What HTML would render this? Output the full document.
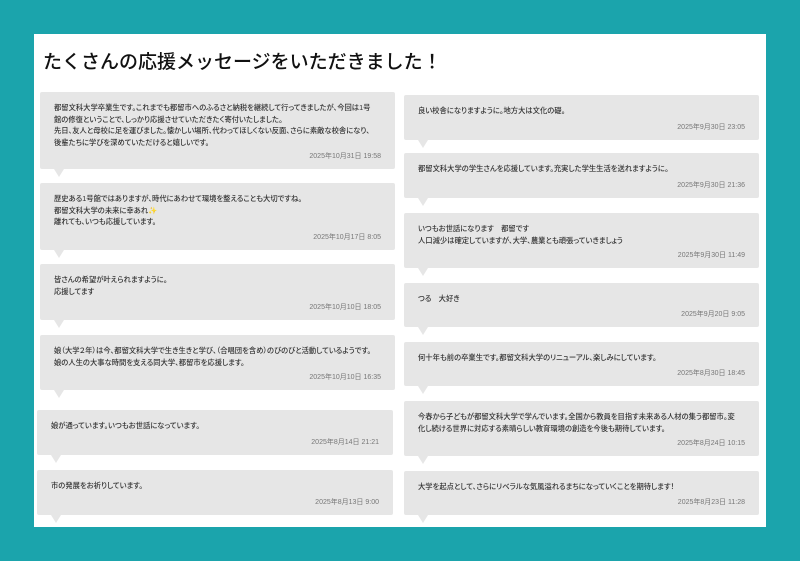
<!DOCTYPE html>
<html><head><meta charset="utf-8"><style>
*{margin:0;padding:0;box-sizing:border-box}
body{width:800px;height:561px;background:#1ba4ac;position:relative;overflow:hidden;font-family:"Liberation Sans","Noto Sans CJK JP",sans-serif;font-feature-settings:"palt"}
.panel{position:absolute;left:34px;top:34px;width:732px;height:493px;background:#fff}
h1{position:absolute;left:43px;top:47px;font-size:19px;font-weight:500;color:#111;white-space:nowrap;font-feature-settings:normal}
.b{position:absolute;background:#e6e6e6;border-radius:2px;padding:10px 14px 0 14px;font-size:7.3px;line-height:11.5px;color:#333;font-weight:500}
.b p{white-space:nowrap}
.b .d{position:absolute;right:14px;bottom:7px;color:#777;font-size:7px;font-weight:400}
.b:after{content:"";position:absolute;left:14px;bottom:-8px;border-left:5px solid transparent;border-right:5px solid transparent;border-top:8px solid #e6e6e6}
</style></head><body>
<div class="panel"></div>
<h1>たくさんの応援メッセージをいただきました！</h1>

<div class="b" style="left:40px;top:92px;width:355px;height:77px"><p>都留文科大学卒業生です。これまでも都留市へのふるさと納税を継続して行ってきましたが、今回は1号<br>館の修復ということで、しっかり応援させていただきたく寄付いたしました。<br>先日、友人と母校に足を運びました。懐かしい場所、代わってほしくない反面、さらに素敵な校舎になり、<br>後輩たちに学びを深めていただけると嬉しいです。</p><span class="d">2025年10月31日 19:58</span></div>
<div class="b" style="left:40px;top:183px;width:355px;height:67px"><p>歴史ある1号館ではありますが、時代にあわせて環境を整えることも大切ですね。<br>都留文科大学の未来に幸あれ<span style="color:#e8c040">✨</span><br>離れても、いつも応援しています。</p><span class="d">2025年10月17日 8:05</span></div>
<div class="b" style="left:40px;top:264px;width:355px;height:56px"><p>皆さんの希望が叶えられますように。<br>応援してます</p><span class="d">2025年10月10日 18:05</span></div>
<div class="b" style="left:40px;top:335px;width:355px;height:55px"><p>娘（大学２年）は今、都留文科大学で生き生きと学び、（合唱団を含め）のびのびと活動しているようです。<br>娘の人生の大事な時間を支える同大学、都留市を応援します。</p><span class="d">2025年10月10日 16:35</span></div>
<div class="b" style="left:37px;top:410px;width:356px;height:45px"><p>娘が通っています。いつもお世話になっています。</p><span class="d">2025年8月14日 21:21</span></div>
<div class="b" style="left:37px;top:470px;width:356px;height:45px"><p>市の発展をお祈りしています。</p><span class="d">2025年8月13日 9:00</span></div>

<div class="b" style="left:404px;top:95px;width:355px;height:45px"><p>良い校舎になりますように。地方大は文化の礎。</p><span class="d">2025年9月30日 23:05</span></div>
<div class="b" style="left:404px;top:153px;width:355px;height:45px"><p>都留文科大学の学生さんを応援しています。充実した学生生活を送れますように。</p><span class="d">2025年9月30日 21:36</span></div>
<div class="b" style="left:404px;top:213px;width:355px;height:55px"><p>いつもお世話になります　都留です<br>人口減少は確定していますが、大学、農業とも頑張っていきましょう</p><span class="d">2025年9月30日 11:49</span></div>
<div class="b" style="left:404px;top:283px;width:355px;height:44px"><p>つる　大好き</p><span class="d">2025年9月20日 9:05</span></div>
<div class="b" style="left:404px;top:342px;width:355px;height:44px"><p>何十年も前の卒業生です。都留文科大学のリニューアル、楽しみにしています。</p><span class="d">2025年8月30日 18:45</span></div>
<div class="b" style="left:404px;top:401px;width:355px;height:55px"><p>今春から子どもが都留文科大学で学んでいます。全国から教員を目指す未来ある人材の集う都留市。変<br>化し続ける世界に対応する素晴らしい教育環境の創造を今後も期待しています。</p><span class="d">2025年8月24日 10:15</span></div>
<div class="b" style="left:404px;top:471px;width:355px;height:44px"><p>大学を起点として、さらにリベラルな気風溢れるまちになっていくことを期待します！</p><span class="d">2025年8月23日 11:28</span></div>
</body></html>
